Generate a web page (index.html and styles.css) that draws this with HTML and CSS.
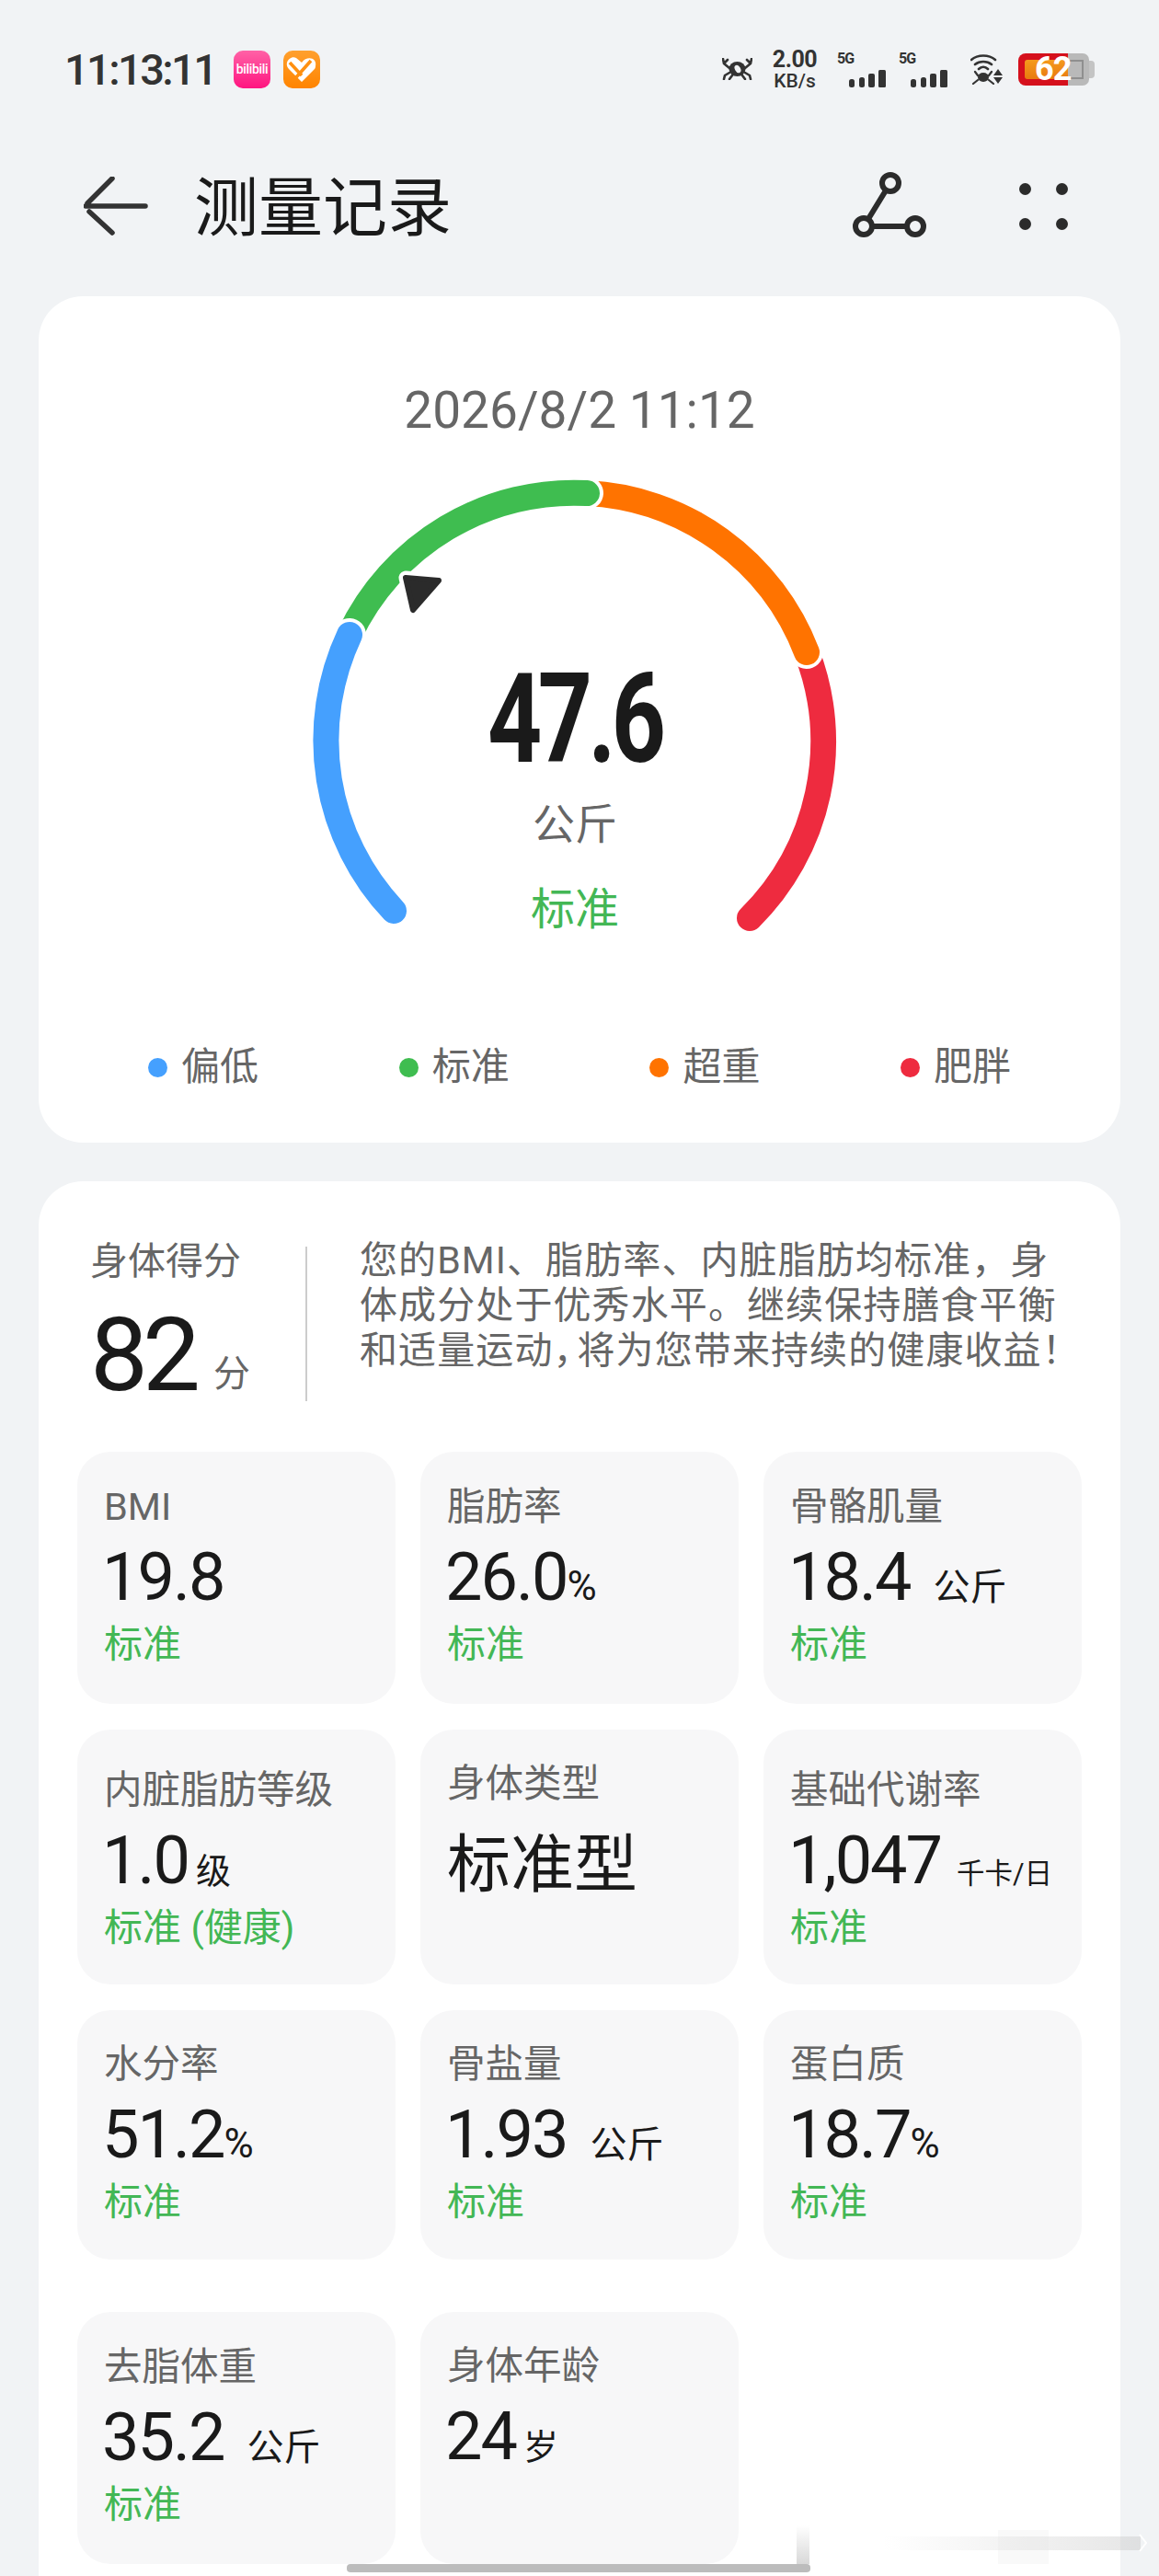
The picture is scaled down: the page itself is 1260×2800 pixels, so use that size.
FILE: index.html
```html
<!DOCTYPE html>
<html lang="zh-CN">
<head>
    <meta charset="UTF-8">
    <meta name="viewport" content="width=device-width, initial-scale=1.0">
    <title>测量记录</title>
    <link rel="stylesheet" href="styles.css">
</head>
<body>
    <div class="page">
        <div class="status-bar">
            <div class="status-left">
                <span class="clock">11:13:11</span>
                <span class="app-icon app-pink">bilibili</span>
                <svg class="app-icon" viewBox="0 0 40 41">
                    <defs>
                        <linearGradient id="orangeFill" x1="0" y1="0" x2="0" y2="1">
                            <stop offset="0" stop-color="#ffa02e"/>
                            <stop offset="1" stop-color="#ff8400"/>
                        </linearGradient>
                    </defs>
                    <rect width="40" height="41" rx="10" fill="url(#orangeFill)"/>
                    <path d="M20 34 L6 20 C0 13 8 5 14 8 L20 13 C26 5 37 8 35 17 C35 19 34 20 33 21 Z" fill="#fff"/>
                    <path d="M7 13 L20 27 M14 29 L30 11" stroke="#ff9010" stroke-width="3.6" fill="none"/>
                </svg>
            </div>
            <div class="status-right">
                <svg class="crab" viewBox="0 0 33 24">
                    <ellipse cx="16.5" cy="12" rx="9" ry="8" fill="#333"/>
                    <ellipse cx="17" cy="12" rx="3" ry="4.5" fill="#f1f3f5" transform="rotate(-30 17 12)"/>
                    <path d="M8 11 L2 6 L1 1 M2 6 L6 2 M25 11 L31 6 L32 1 M31 6 L27 2 M8 16 L3 19 L2 23 M25 16 L30 19 L31 23 M11 19 L8 23 M22 19 L25 23" stroke="#333" stroke-width="2.6" fill="none" stroke-linecap="round"/>
                </svg>
                <div class="speed">
                    <span class="speed-value">2.00</span>
                    <span class="speed-unit">KB/s</span>
                </div>
                <div class="signal">
                    <span class="signal-name">5G</span>
                    <svg class="signal-bars" viewBox="0 0 40 19">
                        <rect x="0" y="10" width="6" height="9" rx="2.5"/>
                        <rect x="11" y="8" width="6" height="11" rx="2.5"/>
                        <rect x="21" y="4" width="7" height="15" rx="2"/>
                        <rect x="32" y="0" width="8" height="19" rx="1.5"/>
                    </svg>
                </div>
                <div class="signal">
                    <span class="signal-name">5G</span>
                    <svg class="signal-bars" viewBox="0 0 40 19">
                        <rect x="0" y="10" width="6" height="9" rx="2.5"/>
                        <rect x="11" y="8" width="6" height="11" rx="2.5"/>
                        <rect x="21" y="4" width="7" height="15" rx="2"/>
                        <rect x="32" y="0" width="8" height="19" rx="1.5"/>
                    </svg>
                </div>
                <svg class="wifi" viewBox="0 0 36 33">
                    <path d="M1 6 C8 0 20 0 27 6 M5 11 C10 7 18 7 23 11 M9 16 C12 13 16 13 19 16" stroke="#333" stroke-width="2.6" fill="none" stroke-linecap="round"/>
                    <ellipse cx="14" cy="25" rx="6" ry="5" fill="#333"/>
                    <path d="M8 23 L5 19 M20 23 L23 19 M8 28 L3 32 M20 28 L25 32" stroke="#333" stroke-width="2.2" stroke-linecap="round"/>
                    <path d="M30 16 L35 23 H25 Z M25 25 H35 L30 32 Z" fill="#333"/>
                </svg>
                <div class="battery">
                    <div class="battery-used"><div class="battery-core"></div></div>
                    <div class="battery-empty"></div>
                    <div class="battery-cap"></div>
                    <span class="battery-num">62</span>
                </div>
            </div>
        </div>

        <div class="nav-bar">
            <svg class="back-icon" viewBox="0 0 70 64">
                <path d="M2 32 H67 M31 2 L4 29 M6 38 L31 61" stroke="#333" stroke-width="5.5" fill="none" stroke-linecap="round"/>
            </svg>
            <div class="nav-title">测量记录</div>
            <svg class="link-icon" viewBox="0 0 80 76">
                <circle cx="41" cy="13" r="9" />
                <circle cx="12" cy="60" r="9" />
                <circle cx="68" cy="60" r="9" />
                <path d="M36 21 L17 52 M21 60 H59" />
            </svg>
            <div class="more-icon">
                <span></span><span></span><span></span><span></span>
            </div>
        </div>

        <div class="card weight-card">
            <div class="record-date">2026/8/2 11:12</div>
            <div class="gauge">
                <svg class="gauge-arc" viewBox="0 0 620 530">
                    <path class="seg-red" d="M562 209 A270 270 0 0 1 500 498"/>
                    <path class="seg-halo" d="M323 36 A270 270 0 0 1 562 209"/>
                    <path class="seg-orange" d="M323 36 A270 270 0 0 1 562 209"/>
                    <path class="seg-halo" d="M65 190 A270 270 0 0 1 323 36"/>
                    <path class="seg-green" d="M65 190 A270 270 0 0 1 323 36"/>
                    <path class="seg-halo" d="M113 490 A270 270 0 0 1 65 190"/>
                    <path class="seg-blue" d="M113 490 A270 270 0 0 1 65 190"/>
                    <path class="pointer-halo" d="M126 128 L162 131 L134 163 Z"/>
                    <path class="pointer" d="M126 128 L162 131 L134 163 Z"/>
                </svg>
                <div class="weight-value">47.6</div>
                <div class="weight-unit">公斤</div>
                <div class="weight-state">标准</div>
            </div>
            <div class="legend">
                <div class="legend-item"><span class="dot dot-blue"></span>偏低</div>
                <div class="legend-item"><span class="dot dot-green"></span>标准</div>
                <div class="legend-item"><span class="dot dot-orange"></span>超重</div>
                <div class="legend-item"><span class="dot dot-red"></span>肥胖</div>
            </div>
        </div>

        <div class="card detail-card">
            <div class="score-row">
                <div class="score">
                    <div class="score-label">身体得分</div>
                    <div class="score-value">82<span class="score-unit">分</span></div>
                </div>
                <div class="score-rule"></div>
                <div class="score-text">您的BMI、脂肪率、内脏脂肪均标准，身<br>体成分处于优秀水平。继续保持膳食平衡<br>和适量运动<span class="punct">，</span>将为您带来持续的健康收益<span class="punct">！</span></div>
            </div>

            <div class="tile-grid">
                <div class="tile">
                    <div class="tile-label">BMI</div>
                    <div class="tile-value">19.8</div>
                    <div class="tile-state">标准</div>
                </div>
                <div class="tile">
                    <div class="tile-label">脂肪率</div>
                    <div class="tile-value">26.0<span class="unit-pct">%</span></div>
                    <div class="tile-state">标准</div>
                </div>
                <div class="tile">
                    <div class="tile-label">骨骼肌量</div>
                    <div class="tile-value">18.4<span class="unit-wide">公斤</span></div>
                    <div class="tile-state">标准</div>
                </div>

                <div class="tile tile-low">
                    <div class="tile-label">内脏脂肪等级</div>
                    <div class="tile-value">1.0<span class="unit-near">级</span></div>
                    <div class="tile-state">标准 (健康)</div>
                </div>
                <div class="tile tile-top">
                    <div class="tile-label">身体类型</div>
                    <div class="tile-type">标准型</div>
                </div>
                <div class="tile tile-low">
                    <div class="tile-label">基础代谢率</div>
                    <div class="tile-value">1,047<span class="unit-small">千卡/日</span></div>
                    <div class="tile-state">标准</div>
                </div>

                <div class="tile">
                    <div class="tile-label">水分率</div>
                    <div class="tile-value">51.2<span class="unit-pct">%</span></div>
                    <div class="tile-state">标准</div>
                </div>
                <div class="tile">
                    <div class="tile-label">骨盐量</div>
                    <div class="tile-value">1.93<span class="unit-wide">公斤</span></div>
                    <div class="tile-state">标准</div>
                </div>
                <div class="tile">
                    <div class="tile-label">蛋白质</div>
                    <div class="tile-value">18.7<span class="unit-pct">%</span></div>
                    <div class="tile-state">标准</div>
                </div>

                <div class="tile tile-gap">
                    <div class="tile-label">去脂体重</div>
                    <div class="tile-value">35.2<span class="unit-wide">公斤</span></div>
                    <div class="tile-state">标准</div>
                </div>
                <div class="tile tile-gap tile-top">
                    <div class="tile-label">身体年龄</div>
                    <div class="tile-value">24<span class="unit-near">岁</span></div>
                </div>
            </div>
        </div>

        <div class="home-bar"></div>
        <div class="smear smear-long"></div>
        <div class="smear smear-a"></div>
        <div class="smear smear-b"></div>
        <svg class="smear smear-tip" viewBox="0 0 10 20">
            <path d="M1 1 L8 10 L1 19" fill="none" stroke="#ffffff" stroke-width="2"/>
        </svg>
    </div>
</body>
</html>
```

FILE: styles.css
```css
body {
    margin: 0;
    padding: 0;
    background-color: #f1f3f5;
    font-family: Roboto, "Noto Sans CJK SC", sans-serif;
    color: #1a1a1a;
}
.page {
    position: relative;
    height: 2800px;
    overflow: hidden;
    box-sizing: border-box;
    padding: 0 42px;
}

/* status bar */
.status-bar {
    height: 150px;
    display: flex;
    justify-content: space-between;
    align-items: center;
}
.status-left {
    display: flex;
    align-items: center;
    padding-left: 28px;
}
.clock {
    font-size: 47px;
    font-weight: 500;
    letter-spacing: -2.6px;
    color: #333;
    width: 184px;
}
.app-icon {
    width: 40px;
    height: 41px;
    margin-right: 14px;
    flex-shrink: 0;
}
.app-pink {
    border-radius: 10px;
    background: linear-gradient(#ff62a6, #ff1580);
    color: #fff;
    font-size: 14px;
    font-weight: 500;
    line-height: 41px;
    letter-spacing: -0.3px;
    text-align: center;
    overflow: hidden;
}
.status-right {
    display: flex;
    align-items: center;
    padding-right: 28px;
}
.crab {
    width: 33px;
    height: 24px;
    margin-right: 19px;
}
.speed {
    width: 54px;
    display: flex;
    flex-direction: column;
    align-items: center;
    color: #333;
    font-weight: 700;
    margin-right: 19px;
}
.speed-value {
    font-size: 25px;
    line-height: 25px;
    letter-spacing: -0.5px;
}
.speed-unit {
    font-size: 21px;
    line-height: 22px;
    font-weight: 500;
}
.signal {
    width: 53px;
    height: 40px;
    position: relative;
    margin-right: 14px;
}
.signal-name {
    font-size: 16px;
    font-weight: 700;
    line-height: 18px;
    letter-spacing: -1px;
    color: #333;
    display: block;
}
.signal-bars {
    position: absolute;
    right: 0;
    bottom: 0;
    width: 40px;
    height: 19px;
    fill: #333;
}
.wifi {
    width: 36px;
    height: 33px;
    margin: 0 16px 0 11px;
}
.battery {
    position: relative;
    width: 83px;
    height: 35px;
    display: flex;
}
.battery-used {
    width: 54px;
    background: #d5101c;
    border-radius: 8px 0 0 8px;
    box-sizing: border-box;
    padding: 7px 0 7px 7px;
}
.battery-core {
    height: 100%;
    background: linear-gradient(#f59a1c, #e87a10);
    border-radius: 3px 0 0 3px;
}
.battery-empty {
    width: 23px;
    background: #b9b9b9;
    border-radius: 0 7px 7px 0;
    box-sizing: border-box;
    padding: 7px 6px 7px 0;
}
.battery-empty::after {
    content: "";
    display: block;
    height: 100%;
    border: 2px solid #8f8f8f;
    border-left: none;
    box-sizing: border-box;
}
.battery-cap {
    width: 6px;
    height: 19px;
    margin-top: 8px;
    background: #c4c4c4;
    border-radius: 0 4px 4px 0;
}
.battery-num {
    position: absolute;
    left: 18px;
    top: 0;
    font-size: 36px;
    line-height: 35px;
    font-weight: 700;
    letter-spacing: -1px;
    color: #fff;
}

/* title row */
.nav-bar {
    height: 148px;
    display: flex;
    align-items: center;
    margin-bottom: 24px;
}
.back-icon {
    width: 70px;
    height: 64px;
    margin-left: 49px;
    flex-shrink: 0;
}
.nav-title {
    font-size: 70px;
    margin: 5px 0 0 50px;
    flex-grow: 1;
    line-height: 80px;
}
.link-icon {
    width: 80px;
    height: 76px;
    fill: none;
    stroke: #2b2b2b;
    stroke-width: 6;
    margin-right: 101px;
}
.more-icon {
    display: grid;
    grid-template-columns: 13px 13px;
    grid-template-rows: 13px 13px;
    column-gap: 27px;
    row-gap: 25px;
    margin-right: 57px;
}
.more-icon span {
    background: #2b2b2b;
    border-radius: 50%;
}

/* cards */
.card {
    background: #fff;
    border-radius: 48px;
}
.weight-card {
    height: 920px;
    box-sizing: border-box;
    padding-top: 90px;
    margin-bottom: 42px;
}
.record-date {
    font-size: 55px;
    line-height: 68px;
    text-align: center;
    color: #666;
}
.gauge {
    position: relative;
    width: 620px;
    height: 530px;
    margin: 20px 0 0 273px;
    display: flex;
    flex-direction: column;
    align-items: center;
    padding-top: 218px;
    box-sizing: border-box;
}
.gauge-arc {
    position: absolute;
    left: 0;
    top: 0;
    width: 620px;
    height: 530px;
    fill: none;
    stroke-width: 28;
    stroke-linecap: round;
}
.seg-red { stroke: #ee2b3f; }
.seg-orange { stroke: #ff7300; }
.seg-green { stroke: #3fbd50; }
.seg-blue { stroke: #45a0fe; }
.seg-halo {
    stroke: #fff;
    stroke-width: 36;
}
.pointer-halo {
    fill: #fff;
    stroke: #fff;
    stroke-width: 15;
    stroke-linejoin: round;
}
.pointer {
    fill: #2b2b2b;
    stroke: #2b2b2b;
    stroke-width: 6;
    stroke-linejoin: round;
}
.weight-value {
    position: relative;
    font-size: 136px;
    font-weight: 700;
    line-height: 120px;
    letter-spacing: -6px;
    transform: scaleX(0.76);
    top: 4px;
}
.weight-unit {
    position: relative;
    font-size: 46px;
    line-height: 60px;
    color: #666;
    margin-top: 28px;
}
.weight-state {
    position: relative;
    font-size: 48px;
    line-height: 60px;
    color: #43b755;
    margin-top: 33px;
}
.legend {
    display: flex;
    padding-left: 119px;
    margin-top: 105px;
}
.legend-item {
    width: 272.7px;
    flex-shrink: 0;
    display: flex;
    align-items: center;
    font-size: 42px;
    line-height: 50px;
    color: #666;
}
.dot {
    width: 21px;
    height: 21px;
    border-radius: 50%;
    margin-right: 15px;
}
.dot-blue { background: #45a0fe; }
.dot-green { background: #3fbd50; }
.dot-orange { background: #ff7300; }
.dot-red { background: #ee2b3f; }

/* body score */
.detail-card {
    height: 1600px;
    box-sizing: border-box;
    padding: 62px 42px 0;
}
.score-row {
    display: flex;
    height: 232px;
}
.score {
    width: 248px;
    box-sizing: border-box;
    padding-left: 14px;
}
.score-label {
    font-size: 41px;
    line-height: 50px;
    color: #666;
}
.score-value {
    font-size: 112px;
    line-height: 130px;
    letter-spacing: -6px;
    margin-top: 12px;
    white-space: nowrap;
}
.score-unit {
    font-size: 40px;
    line-height: 0;
    letter-spacing: 0;
    margin-left: 20px;
    color: #666;
    vertical-align: 4px;
}
.score-rule {
    width: 2px;
    height: 168px;
    margin-top: 9px;
    background: #cccccc;
    flex-shrink: 0;
}
.score-text {
    font-size: 41px;
    line-height: 49px;
    color: #666;
    white-space: nowrap;
    margin-left: 57px;
    letter-spacing: 1.1px;
}
.punct {
    letter-spacing: -15px;
}

.tile-grid {
    display: grid;
    grid-template-columns: 346px 346px 346px;
    grid-template-rows: 274px 277px 271px 274px;
    column-gap: 27px;
    row-gap: 28px;
}
.tile {
    background: #f7f7f8;
    border-radius: 36px;
    padding: 0 0 4px 29px;
    display: flex;
    flex-direction: column;
    justify-content: center;
}
.tile-low {
    padding-top: 8px;
}
.tile-top {
    justify-content: flex-start;
    padding-top: 33px;
}
.tile-gap {
    margin-top: 29px;
    height: 274px;
    box-sizing: border-box;
}
.tile-label {
    font-size: 41.5px;
    line-height: 52px;
    color: #666;
    margin-bottom: 8px;
}
.tile-value {
    font-size: 72px;
    line-height: 86px;
    letter-spacing: -2px;
    margin-left: -2px;
    color: #1a1a1a;
    white-space: nowrap;
}
.tile-type {
    font-size: 69px;
    line-height: 86px;
    margin-top: 12px;
}
.tile-state {
    font-size: 42px;
    line-height: 52px;
    color: #43b755;
    margin-top: 4px;
}
.unit-pct, .unit-wide, .unit-near, .unit-small {
    line-height: 0;
    letter-spacing: 0;
}
.unit-pct {
    font-size: 44px;
}
.unit-wide {
    font-size: 40px;
    margin-left: 25px;
}
.unit-near {
    font-size: 38px;
    margin-left: 8px;
}
.unit-small {
    font-size: 30.5px;
    margin-left: 17px;
}

/* leftovers of the gesture bar at the screen edge */
.home-bar {
    position: absolute;
    left: 377px;
    top: 2787px;
    width: 504px;
    height: 9px;
    border-radius: 4px;
    background: #bcbcbc;
}
.smear {
    position: absolute;
}
.smear-long {
    left: 960px;
    top: 2757px;
    width: 280px;
    height: 15px;
    background: linear-gradient(to right, rgba(200,200,200,0), rgba(200,200,200,0.45));
}
.smear-a {
    left: 866px;
    top: 2745px;
    width: 14px;
    height: 42px;
    background: linear-gradient(rgba(190,190,190,0), rgba(190,190,190,0.6));
}
.smear-b {
    left: 1085px;
    top: 2750px;
    width: 55px;
    height: 37px;
    background: rgba(225,225,225,0.2);
}
.smear-tip {
    left: 1238px;
    top: 2754px;
    width: 10px;
    height: 20px;
}
```
